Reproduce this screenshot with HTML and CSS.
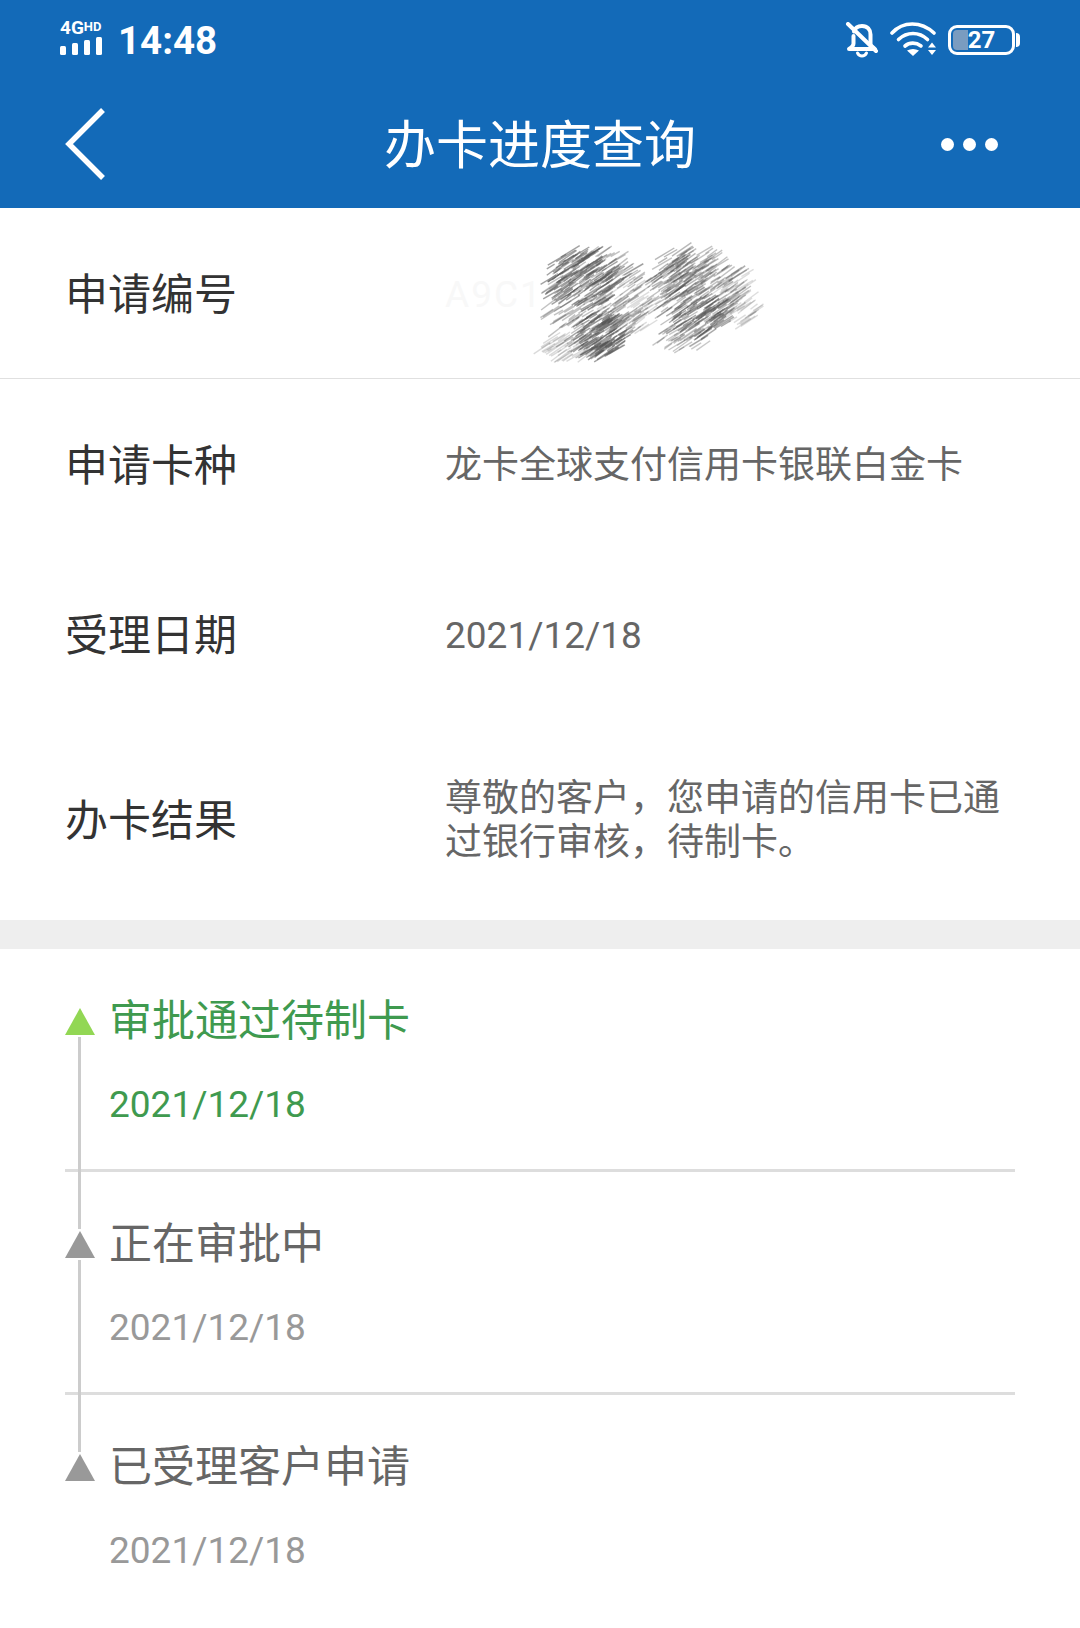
FILE: index.html
```html
<!DOCTYPE html>
<html lang="zh-CN">
<head>
  <meta charset="UTF-8">
  <title>办卡进度查询</title>
  <link rel="stylesheet" href="styles.css">
</head>
<body>
  <header class="top">
    <div class="status">
      <div class="status-left">
        <div class="net">
          <div class="net-text"><span class="net-4g">4G</span><span class="net-hd">HD</span></div>
          <div class="bars"><i class="bar b1"></i><i class="bar b2"></i><i class="bar b3"></i><i class="bar b4"></i></div>
        </div>
        <span class="clock">14:48</span>
      </div>
      <div class="status-right">
        <svg class="bell" width="34" height="36" viewBox="0 0 34 36" fill="none" stroke="#fff" stroke-width="4" stroke-linecap="round" stroke-linejoin="round">
          <path d="M9 9.500C10 6 13 4 17 4c5.500 0 8.500 3.500 8.500 8.500v9c0 2 2.500 4 4.500 5.500H4c2.500-1.500 4.500-3.500 4.500-5.500V14"/>
          <path d="M12.500 31c1 2 2.500 3 4.500 3s3.500-1 4.500-3" stroke-width="3"/>
          <path d="M3 2l28 27"/>
        </svg>
        <svg class="wifi" width="48" height="36" viewBox="0 0 48 36" fill="none" stroke="#fff" stroke-width="3.600" stroke-linecap="round">
          <path d="M2 11C13-1 31-1 44 11"/>
          <path d="M8.500 17.500c8.500-8 20.500-8 29 0"/>
          <path d="M15 24c4.500-3.800 11-3.800 16 0"/>
          <path d="M17 28.500c4-2 8-2 12 0l-6 5.500z" fill="#fff" stroke="none"/>
          <path d="M42 20.500l4 5h-8zM38 28h8l-4 5z" fill="#fff" stroke="none"/>
        </svg>
        <div class="battery">
          <div class="battery-body">
            <div class="battery-fill"></div>
            <span class="battery-num">27</span>
          </div>
          <div class="battery-cap"></div>
        </div>
      </div>
    </div>
    <div class="nav">
      <svg class="back" width="44" height="76" viewBox="0 0 44 76" fill="none" stroke="#fff" stroke-width="5.500">
        <path d="M40 3L6 37l34 34"/>
      </svg>
      <h1 class="title">办卡进度查询</h1>
      <div class="dots"><i></i><i></i><i></i></div>
    </div>
  </header>

  <section class="info">
    <div class="row row-first">
      <div class="label">申请编号</div>
      <div class="value value-hidden">
        <span class="faint">A9C1</span>
        <svg id="scribble" class="scribble" width="340" height="170" viewBox="0 0 340 170"></svg>
      </div>
    </div>
    <div class="row row-second">
      <div class="label">申请卡种</div>
      <div class="value">龙卡全球支付信用卡银联白金卡</div>
    </div>
    <div class="row">
      <div class="label">受理日期</div>
      <div class="value">2021/12/18</div>
    </div>
    <div class="row row-last">
      <div class="label">办卡结果</div>
      <div class="value">尊敬的客户，您申请的信用卡已通过银行审核，待制卡。</div>
    </div>
  </section>

  <ul class="steps">
    <li class="step step-active">
      <div class="step-title">审批通过待制卡</div>
      <div class="step-date">2021/12/18</div>
    </li>
    <li class="step">
      <div class="step-title">正在审批中</div>
      <div class="step-date">2021/12/18</div>
    </li>
    <li class="step step-last">
      <div class="step-title">已受理客户申请</div>
      <div class="step-date">2021/12/18</div>
    </li>
  </ul>

  <script src="script.js"></script>
</body>
</html>
```

FILE: styles.css
```css
html, body {
  margin: 0;
  padding: 0;
  background: #fff;
  font-family: Roboto, "Noto Sans CJK SC", sans-serif;
  overflow: hidden;
}

.top {
  background: #136ab8;
  color: #fff;
  height: 208px;
}

.status {
  height: 80px;
  display: flex;
  justify-content: space-between;
  align-items: center;
  padding: 0 60px;
}

.status-left {
  display: flex;
  align-items: center;
  gap: 12px;
}

.net {
  width: 46px;
  display: flex;
  flex-direction: column;
  gap: 0;
  margin-bottom: 5px;
}

.net-text {
  display: flex;
  align-items: flex-start;
  height: 16px;
  line-height: 16px;
  font-weight: 700;
  white-space: nowrap;
}

.net-4g {
  font-size: 19px;
}

.net-hd {
  font-size: 13px;
  line-height: 13px;
}

.bars {
  display: flex;
  align-items: flex-end;
  gap: 6px;
  height: 19px;
}

.bar {
  width: 6px;
  background: #fff;
  border-radius: 1.500px;
}

.b1 { height: 9px; }
.b2 { height: 12px; }
.b3 { height: 15px; }
.b4 { height: 18px; }

.clock {
  font-size: 38.500px;
  font-weight: 700;
  line-height: 44px;
  padding-top: 2px;
}

.status-right {
  display: flex;
  align-items: center;
  gap: 10px;
}

.bell {
  margin-right: 1px;
}

.battery {
  display: flex;
  align-items: center;
  gap: 1px;
}

.battery-body {
  position: relative;
  box-sizing: border-box;
  width: 67px;
  height: 30px;
  border: 3px solid #fff;
  border-radius: 9px;
  display: flex;
  align-items: center;
  justify-content: center;
}

.battery-fill {
  position: absolute;
  left: 2px;
  top: 2px;
  bottom: 2px;
  width: 15px;
  background: #7a9cc0;
  border-radius: 4px 0 0 4px;
}

.battery-num {
  position: relative;
  font-size: 24px;
  font-weight: 700;
  line-height: 24px;
}

.battery-cap {
  width: 4px;
  height: 14px;
  background: #fff;
  border-radius: 0 4px 4px 0;
}

.nav {
  position: relative;
  height: 128px;
  display: flex;
  align-items: center;
  justify-content: space-between;
  padding: 0 80px 0 63px;
}

.back {
  display: block;
  margin-top: 2px;
}

.title {
  position: absolute;
  left: 0;
  right: 0;
  top: 37px;
  margin: 0;
  text-align: center;
  font-size: 52px;
  font-weight: 400;
  line-height: 60px;
}

.dots {
  display: flex;
  gap: 9px;
  margin-right: 2px;
}

.dots i {
  width: 13px;
  height: 13px;
  border-radius: 50%;
  background: #fff;
}

.row {
  display: flex;
  align-items: center;
  height: 171px;
  padding: 0 60px 0 65px;
}

.row-first {
  height: 167px;
  padding-top: 3px;
  border-bottom: 1px solid #e0e0e0;
}

.row-second {
  height: 169px;
  padding-top: 2px;
}

.row-last {
  height: 199px;
}

.label {
  width: 380px;
  flex: none;
  font-size: 43px;
  line-height: 50px;
  color: #333;
}

.value {
  width: 560px;
  font-size: 37px;
  line-height: 43.500px;
  color: #666;
}

.value-hidden {
  position: relative;
  height: 44px;
}

.faint {
  color: #f8f8f8;
  letter-spacing: 2px;
}

.scribble {
  position: absolute;
  left: 60px;
  top: -66px;
}

.steps {
  list-style: none;
  margin: 0;
  padding: 0 65px;
  border-top: 29px solid #eee;
}

.step {
  position: relative;
  box-sizing: border-box;
  height: 223px;
  padding: 43px 0 0 44px;
  border-bottom: 3px solid #ddd;
}

.step-last {
  border-bottom: none;
}

/* triangle marker */
.step::before {
  content: "";
  position: absolute;
  left: 0;
  top: 59px;
  width: 0;
  height: 0;
  border-left: 15px solid transparent;
  border-right: 15px solid transparent;
  border-bottom: 27px solid #999;
}

/* rail that runs through the divider up to the next marker */
.step::after {
  content: "";
  position: absolute;
  left: 13px;
  top: 88px;
  width: 3px;
  height: 192px;
  background: #ccc;
  z-index: 1;
}

.step-last::after {
  display: none;
}

.step-active::before {
  border-bottom-color: #92d754;
}

.step-title {
  font-size: 43px;
  line-height: 58px;
  color: #666;
}

.step-date {
  margin-top: 33px;
  font-size: 37px;
  line-height: 44px;
  color: #999;
}

.step-active .step-title,
.step-active .step-date {
  color: #3f9a4f;
}
```

FILE: script.js
```js
// pencil hatching over the application number
const svg = document.getElementById('scribble');
let seed = 7;

function rnd() {
  seed = (seed * 16807) % 2147483647;
  return seed / 2147483647;
}

// cx, cy, rx, ry, count, opacity
const blobs = [
  [92, 95, 52, 52, 200, 0.36],
  [78, 72, 36, 30, 120, 0.55],
  [94, 128, 26, 22, 110, 0.55],
  [66, 140, 32, 12, 45, 0.22],
  [122, 100, 32, 28, 60, 0.2],
  [192, 82, 46, 40, 160, 0.36],
  [176, 66, 32, 24, 80, 0.42],
  [196, 108, 28, 20, 80, 0.5],
  [178, 130, 26, 14, 40, 0.32],
  [234, 90, 22, 28, 60, 0.2]
];

let out = '';
for (const [cx, cy, rx, ry, count, op] of blobs) {
  for (let i = 0; i < count; i++) {
    const a = rnd() * Math.PI * 2;
    const r = Math.sqrt(rnd());
    const x = cx + Math.cos(a) * r * rx;
    const y = cy + Math.sin(a) * r * ry;
    const len = 4 + rnd() * 8;
    const ang = -0.66 + rnd() * 0.14;
    const dx = Math.cos(ang) * len;
    const dy = Math.sin(ang) * len;
    out += `<line x1="${(x - dx).toFixed(1)}" y1="${(y - dy).toFixed(1)}" x2="${(x + dx).toFixed(1)}" y2="${(y + dy).toFixed(1)}" stroke="#555" stroke-opacity="${op}" stroke-width="1.400"/>`;
  }
}
svg.innerHTML = out;
```
